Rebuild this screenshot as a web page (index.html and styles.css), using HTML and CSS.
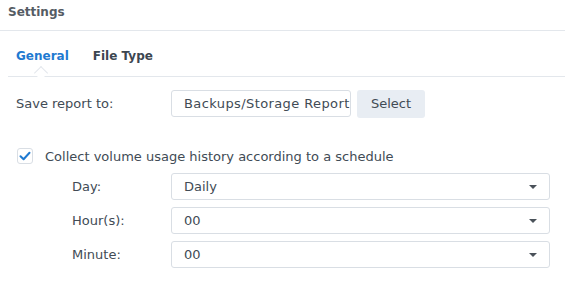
FILE: index.html
```html
<!DOCTYPE html>
<html lang="en">
<head>
  <meta charset="UTF-8">
  <title>Settings</title>
  <link rel="stylesheet" href="styles.css">
</head>
<body>
  <div class="panel">
    <div class="panel-title">Settings</div>

    <div class="tabs">
      <div class="tab active">General</div>
      <div class="tab">File Type</div>
    </div>

    <div class="form">
      <div class="row">
        <label class="label">Save report to:</label>
        <div class="text-field">Backups/Storage Report</div>
        <button type="button" class="btn">Select</button>
      </div>

      <div class="check-row">
        <span class="checkbox">
          <svg width="12" height="10" viewBox="0 0 12 10">
            <path d="M1.5 5.2 L4.6 8.2 L10.5 1.8" fill="none" stroke="#1f7ad1" stroke-width="2" stroke-linecap="round" stroke-linejoin="round"/>
          </svg>
        </span>
        <span>Collect volume usage history according to a schedule</span>
      </div>

      <div class="schedule">
        <div class="row">
          <label class="label sub">Day:</label>
          <div class="select">Daily<span class="caret"></span></div>
        </div>
        <div class="row">
          <label class="label sub">Hour(s):</label>
          <div class="select">00<span class="caret"></span></div>
        </div>
        <div class="row">
          <label class="label sub">Minute:</label>
          <div class="select">00<span class="caret"></span></div>
        </div>
      </div>
    </div>
  </div>
</body>
</html>
```

FILE: styles.css
```css
* {
  box-sizing: border-box;
  font-family: 'DejaVu Sans', Verdana, sans-serif;
}
body {
  margin: 0;
  background: #fff;
  color: #414b55;
  font-size: 13px;
}
.panel {
  width: 565px;
  height: 282px;
  overflow: hidden;
}
.panel-title {
  height: 31px;
  padding: 5px 8px 0;
  font-weight: bold;
  font-size: 12px;
  color: #555c64;
  border-bottom: 1px solid #e3e7ec;
}
.tabs {
  display: flex;
  margin-left: 8px;
  padding: 18px 0 0 8px;
  height: 46px;
  border-bottom: 1px solid #e3e7ec;
}
.tab {
  position: relative;
  font-weight: bold;
  font-size: 12px;
  color: #3c4650;
  margin-right: 24px;
}
.tab.active {
  color: #1f7ad1;
}
/* little notch under the active tab */
.tab.active::after {
  content: '';
  position: absolute;
  left: 20px;
  top: 19px;
  width: 9px;
  height: 9px;
  background: #fff;
  border-left: 1px solid #e3e7ec;
  border-top: 1px solid #e3e7ec;
  transform: rotate(45deg);
}
.form {
  padding: 13px 15px 0 16px;
}
.row {
  display: flex;
  align-items: center;
  height: 27px;
  margin-bottom: 7px;
}
.label {
  width: 155px;
  flex: none;
}
.label.sub {
  width: 99px;
}
.text-field {
  width: 180px;
  height: 27px;
  padding: 0 0 0 12px;
  line-height: 25px;
  letter-spacing: 0.4px;
  border: 1px solid #d9dee4;
  border-radius: 3px;
  white-space: nowrap;
  overflow: hidden;
}
.btn {
  margin-left: 6px;
  width: 68px;
  height: 28px;
  border: none;
  border-radius: 3px;
  background: #e8edf3;
  color: #414b55;
  font-size: 13px;
}
.check-row {
  display: flex;
  align-items: center;
  margin-top: 30px;
  margin-left: 1px;
  height: 18px;
}
.checkbox {
  display: flex;
  align-items: center;
  justify-content: center;
  width: 16px;
  height: 16px;
  margin-right: 12px;
  border: 1px solid #d9dee4;
  border-radius: 3px;
}
.schedule {
  padding-left: 56px;
  margin-top: 8px;
}
.select {
  position: relative;
  width: 379px;
  height: 27px;
  padding: 0 12px;
  line-height: 25px;
  border: 1px solid #d9dee4;
  border-radius: 3px;
}
.caret {
  position: absolute;
  right: 12px;
  top: 11px;
  border-left: 4px solid transparent;
  border-right: 4px solid transparent;
  border-top: 4px solid #4a525a;
}
```
